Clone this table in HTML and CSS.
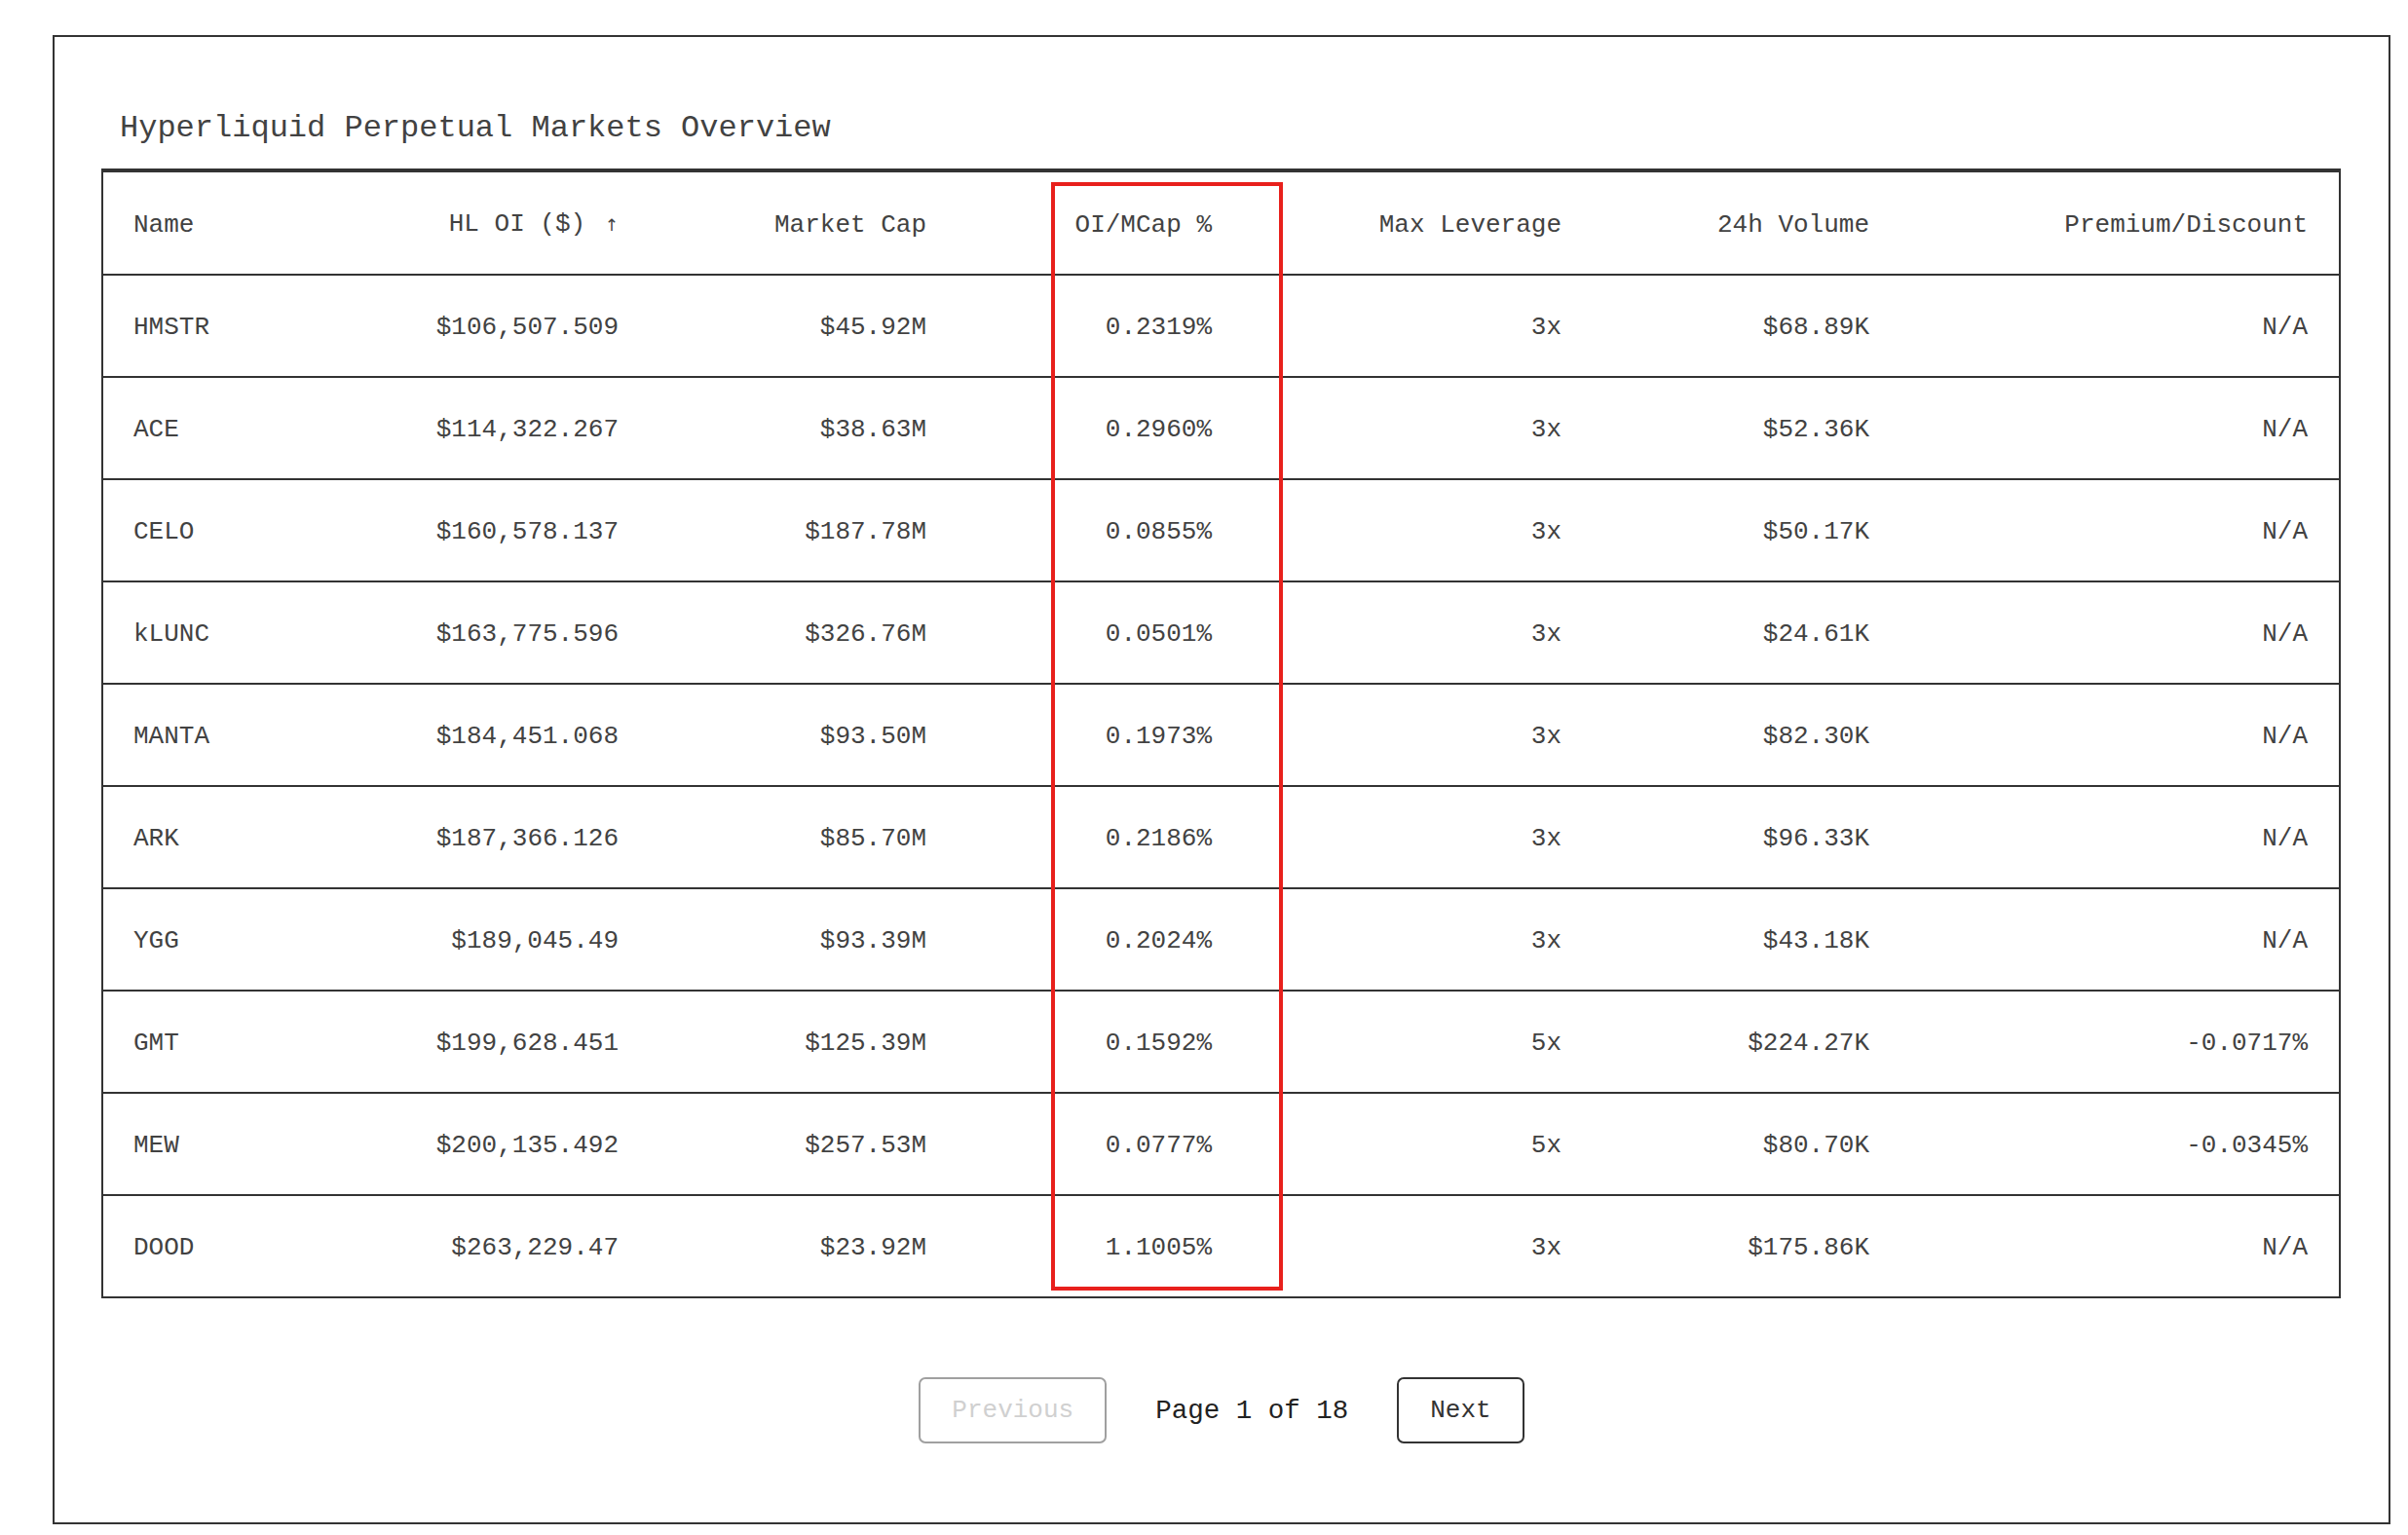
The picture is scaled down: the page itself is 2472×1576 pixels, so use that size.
FILE: index.html
```html
<!DOCTYPE html>
<html lang="en">
<head>
<meta charset="utf-8">
<title>Hyperliquid Perpetual Markets Overview</title>
<link rel="stylesheet" href="styles.css">
</head>
<body>
<div class="panel">
  <h1 class="title">Hyperliquid Perpetual Markets Overview</h1>
  <div class="table-wrap">
    <table class="markets">
      <colgroup>
        <col class="c-name"><col class="c-oi"><col class="c-mcap"><col class="c-ratio"><col class="c-lev"><col class="c-vol"><col class="c-prem">
      </colgroup>
      <thead>
        <tr>
          <th class="left">Name</th>
          <th>HL OI ($) <span class="arrow">↑</span></th>
          <th>Market Cap</th>
          <th>OI/MCap %</th>
          <th>Max Leverage</th>
          <th>24h Volume</th>
          <th>Premium/Discount</th>
        </tr>
      </thead>
      <tbody>
        <tr><td class="left">HMSTR</td><td>$106,507.509</td><td>$45.92M</td><td>0.2319%</td><td>3x</td><td>$68.89K</td><td>N/A</td></tr>
        <tr><td class="left">ACE</td><td>$114,322.267</td><td>$38.63M</td><td>0.2960%</td><td>3x</td><td>$52.36K</td><td>N/A</td></tr>
        <tr><td class="left">CELO</td><td>$160,578.137</td><td>$187.78M</td><td>0.0855%</td><td>3x</td><td>$50.17K</td><td>N/A</td></tr>
        <tr><td class="left">kLUNC</td><td>$163,775.596</td><td>$326.76M</td><td>0.0501%</td><td>3x</td><td>$24.61K</td><td>N/A</td></tr>
        <tr><td class="left">MANTA</td><td>$184,451.068</td><td>$93.50M</td><td>0.1973%</td><td>3x</td><td>$82.30K</td><td>N/A</td></tr>
        <tr><td class="left">ARK</td><td>$187,366.126</td><td>$85.70M</td><td>0.2186%</td><td>3x</td><td>$96.33K</td><td>N/A</td></tr>
        <tr><td class="left">YGG</td><td>$189,045.49</td><td>$93.39M</td><td>0.2024%</td><td>3x</td><td>$43.18K</td><td>N/A</td></tr>
        <tr><td class="left">GMT</td><td>$199,628.451</td><td>$125.39M</td><td>0.1592%</td><td>5x</td><td>$224.27K</td><td>-0.0717%</td></tr>
        <tr><td class="left">MEW</td><td>$200,135.492</td><td>$257.53M</td><td>0.0777%</td><td>5x</td><td>$80.70K</td><td>-0.0345%</td></tr>
        <tr><td class="left">DOOD</td><td>$263,229.47</td><td>$23.92M</td><td>1.1005%</td><td>3x</td><td>$175.86K</td><td>N/A</td></tr>
      </tbody>
    </table>
    <div class="highlight"></div>
  </div>
  <div class="pager">
    <button class="btn btn-disabled" disabled>Previous</button>
    <span class="page-info">Page 1 of 18</span>
    <button class="btn">Next</button>
  </div>
</div>
</body>
</html>
```

FILE: styles.css
```css
* { box-sizing: border-box; }

html, body {
  margin: 0;
  background: #ffffff;
}

body {
  padding: 36px 0 0 54px;
  font-family: "Liberation Mono", "DejaVu Sans Mono", monospace;
  color: #424242;
}

.panel {
  width: 2400px;
  border: 2px solid #333333;
  padding: 48px;
  background: #ffffff;
}

.title {
  margin: 22px 0 17px 19px;
  font-size: 32px;
  line-height: 48px;
  font-weight: normal;
  color: #424242;
}

.table-wrap {
  position: relative;
}

.markets {
  width: 2299px;
  border-collapse: separate;
  border-spacing: 0;
  table-layout: fixed;
  border-left: 2px solid #333333;
  border-right: 2px solid #333333;
  border-top: 4px solid #333333;
  font-size: 26px;
}

.c-name { width: 250px; }
.c-oi { width: 311px; }
.c-mcap { width: 316px; }
.c-ratio { width: 293px; }
.c-lev { width: 359px; }
.c-vol { width: 316px; }
.c-prem { width: 450px; }

.markets th,
.markets td {
  height: 105px;
  padding: 34px 32px 30px 31px;
  line-height: 39px;
  font-weight: normal;
  text-align: right;
  white-space: nowrap;
  border-bottom: 2px solid #333333;
  color: #424242;
}

.markets .left {
  text-align: left;
}

.arrow {
  font-size: 17px;
  font-family: "DejaVu Sans", sans-serif;
  margin-left: 4px;
}

.highlight {
  position: absolute;
  left: 975px;
  top: 14px;
  width: 238px;
  height: 1138px;
  border: 4px solid #e8201c;
  pointer-events: none;
}

.pager {
  display: flex;
  justify-content: center;
  align-items: center;
  gap: 50px;
  margin: 81px 0 33px 0;
}

.btn {
  height: 68px;
  padding: 0 32px;
  font-family: "Liberation Mono", "DejaVu Sans Mono", monospace;
  font-size: 26px;
  color: #333333;
  background: #ffffff;
  border: 2px solid #333333;
  border-radius: 7px;
}

.btn-disabled {
  color: #d0d0d0;
  border-color: #a0a0a0;
}

.page-info {
  font-size: 27.5px;
  color: #222222;
  font-weight: normal;
}
```
